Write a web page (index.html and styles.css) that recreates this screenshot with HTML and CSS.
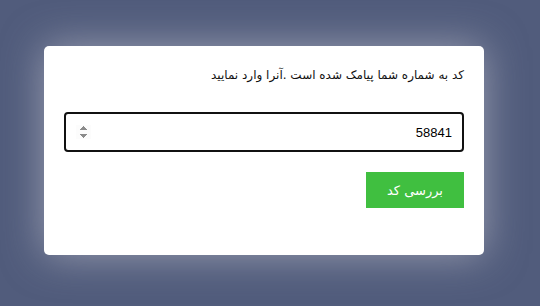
FILE: index.html
```html
<!DOCTYPE html>
<html lang="fa" dir="rtl">
<head>
    <meta charset="UTF-8">
    <meta name="viewport" content="width=device-width, initial-scale=1.0">
    <title>تایید کد</title>
    <link rel="stylesheet" href="styles.css">
</head>
<body>
    <div class="card">
        <p class="hint">کد به شماره شما پیامک شده است .آنرا وارد نمایید</p>
        <form class="verify-form">
            <input type="number" class="code-input" value="58841">
            <div class="actions">
                <button type="submit" class="check-btn">بررسی کد</button>
            </div>
        </form>
    </div>
</body>
</html>
```
FILE: styles.css
```css
body {
    font-family: Tahoma, "DejaVu Sans", sans-serif;
    background-color: #515c7c;
    margin: 0;
    padding: 46px 56px 0 44px;
    height: 306px;
    box-sizing: border-box;
}
.card {
    background: white;
    width: 440px;
    height: 209px;
    box-sizing: border-box;
    padding: 20px;
    border-radius: 5px;
    box-shadow: 0 0 40px rgba(200, 200, 210, 0.6);
}
.hint {
    margin: 0;
    padding-top: 1px;
    font-size: 12px;
    line-height: 16px;
    color: #111;
}
.verify-form {
    margin-top: 29px;
}
.code-input {
    display: block;
    width: 100%;
    height: 40px;
    box-sizing: border-box;
    border: 2px solid #111;
    border-radius: 4px;
    padding: 0 10px;
    font-family: "Liberation Sans", Arial, sans-serif;
    font-size: 13px;
    color: #000;
    outline: none;
}
.code-input::-webkit-inner-spin-button {
    opacity: 1;
}
.actions {
    margin-top: 20px;
    display: flex;
}
.check-btn {
    background: #40bf40;
    color: white;
    border: none;
    width: 98px;
    height: 36px;
    font-family: Tahoma, "DejaVu Sans", sans-serif;
    font-size: 13px;
    cursor: pointer;
}
```
